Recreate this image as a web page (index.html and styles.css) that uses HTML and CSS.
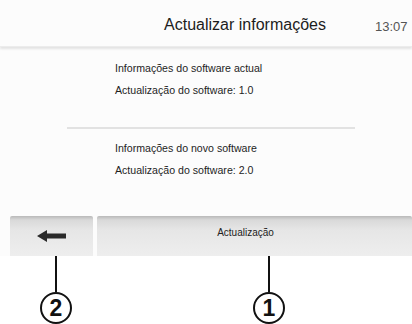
FILE: index.html
```html
<!DOCTYPE html>
<html lang="pt">
<head>
  <meta charset="UTF-8">
  <meta name="viewport" content="width=device-width,initial-scale=1">
  <title>Actualizar informações</title>
  <link rel="stylesheet" href="styles.css">
</head>
<body>

<div class="screen">
  <div class="header">
    <div class="title">Actualizar informações</div>
    <div class="clock">13:07</div>
  </div>

  <div class="info">
    <div class="line">Informações do software actual</div>
    <div class="line">Actualização do software: 1.0</div>
  </div>

  <div class="sep"></div>

  <div class="info info-new">
    <div class="line">Informações do novo software</div>
    <div class="line">Actualização do software: 2.0</div>
  </div>

  <div class="buttons">
    <div class="btn btn-back">
      <svg width="30" height="12" viewBox="0 0 30 12">
        <path d="M0 6 L10 0 L10 3.5 L29 3.5 L29 8.5 L10 8.5 L10 12 Z" fill="#2a2a2a"/>
      </svg>
    </div>
    <div class="btn btn-update">Actualização</div>
  </div>
</div>

<!-- chamadas 1 e 2 -->
<div class="callouts">
  <div class="callout c2">
    <div class="stick"></div>
    <div class="num">2</div>
  </div>
  <div class="callout c1">
    <div class="stick"></div>
    <div class="num">1</div>
  </div>
</div>

</body>
</html>
```

FILE: styles.css
```css
body {
  margin: 0;
  background: #fff;
  font-family: "Liberation Sans", Arial, sans-serif;
  color: #222;
}

.screen {
  width: 412px;
  height: 256px;
  background: #fcfcfc;
  display: flex;
  flex-direction: column;
}

.header {
  height: 46px;
  display: flex;
  align-items: center;
  padding-left: 115px;
  box-shadow: 0 2px 2px #e4e4e4;
  border-bottom: 1px solid #ececec;
}

.title {
  flex: 1;
  text-align: center;
  font-size: 16px;
  color: #1c1c1c;
  padding-top: 4px;
}

.clock {
  width: 37px;
  font-size: 13px;
  color: #555;
  padding-top: 6px;
}

.info {
  padding-left: 115px;
  margin-top: 10px;
}

.line {
  font-size: 10.6px;
  line-height: 22px;
  color: #1e1e1e;
}

.sep {
  margin: 26px 0 0 67px;
  width: 288px;
  height: 2px;
  background: #e2e2e2;
}

.info-new {
  margin-top: 8px;
}

.buttons {
  margin-top: auto;
  display: flex;
  gap: 4px;
  padding-left: 10px;
  height: 40px;
}

.btn {
  height: 40px;
  display: flex;
  justify-content: center;
  background: linear-gradient(#b9b9b9 0, #d9d9d9 4px, #e6e6e6 14px, #eeeeee 100%);
  border-radius: 2px 2px 0 0;
}

.btn-back {
  width: 83px;
  align-items: center;
}

.btn-update {
  flex: 1;
  font-size: 10px;
  color: #222;
  padding: 11px 18px 0 0;
  box-sizing: border-box;
}

.callouts {
  display: flex;
  height: 68px;
}

.callout {
  display: flex;
  flex-direction: column;
  align-items: center;
  width: 34px;
}

.c2 {
  margin-left: 39px;
}

.c1 {
  margin-left: 179px;
}

.stick {
  width: 2px;
  height: 36px;
  background: #111;
}

.num {
  width: 28px;
  height: 28px;
  border: 2px solid #111;
  border-radius: 50%;
  font-size: 23px;
  font-weight: bold;
  line-height: 29px;
  text-align: center;
  color: #111;
}
```
